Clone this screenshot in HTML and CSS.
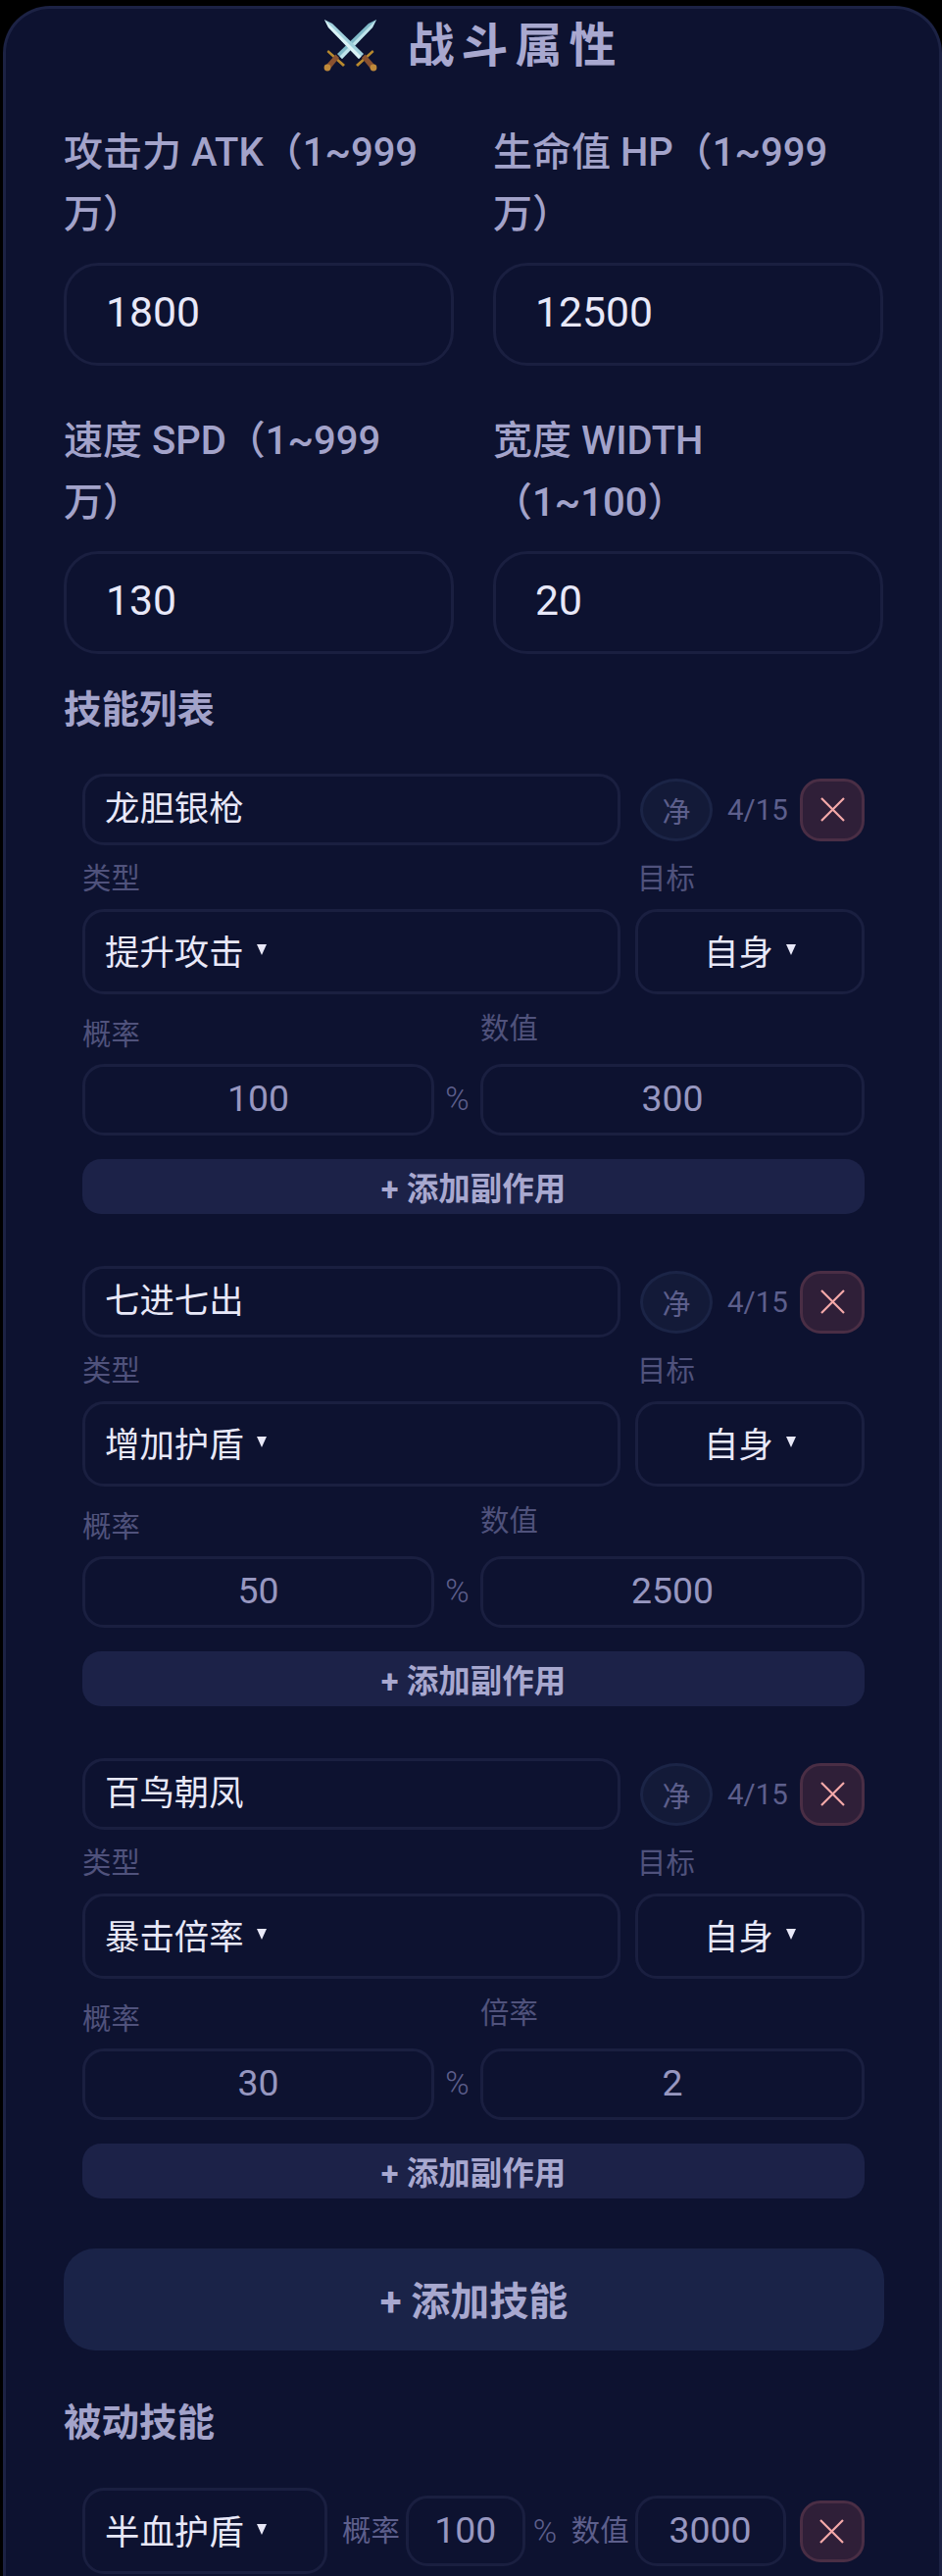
FILE: index.html
```html
<!DOCTYPE html>
<html lang="zh-CN">
<head>
<meta charset="utf-8">
<title>战斗属性</title>
<link rel="stylesheet" href="styles.css">
</head>
<body>
<main class="card">
  <h1 class="title">
    <svg class="swords" viewBox="0 0 55 54" aria-hidden="true">
      <g>
        <path d="M54 1 L46 5 L14 36 L19 41 L50 9 Z" fill="#7fb9c8"/>
        <path d="M54 1 L16.5 38.5 L19 41 L50 9 Z" fill="#bfe3ea"/>
        <path d="M22 47 L5 32 L3.5 34 L20 49 Z" fill="#b98a2e"/>
        <path d="M16 40 L12.5 36.5 L3 47 L7 51 Z" fill="#8a5230"/>
        <circle cx="4" cy="50" r="3.4" fill="#c08a3a"/>
      </g>
      <g>
        <path d="M1 1 L9 5 L41 36 L36 41 L5 9 Z" fill="#9fd0dc"/>
        <path d="M1 1 L38.5 38.5 L36 41 L5 9 Z" fill="#dcf3f6"/>
        <path d="M33 47 L50 32 L51.5 34 L35 49 Z" fill="#b98a2e"/>
        <path d="M39 40 L42.5 36.5 L52 47 L48 51 Z" fill="#8a5230"/>
        <circle cx="51" cy="50" r="3.4" fill="#c08a3a"/>
      </g>
    </svg>
    <span class="title-text">战斗属性</span>
  </h1>

  <div class="stats">
    <div class="stat"><div class="stat-label">攻击力 ATK（1~999<br>万）</div><div class="stat-input">1800</div></div>
    <div class="stat"><div class="stat-label">生命值 HP（1~999<br>万）</div><div class="stat-input">12500</div></div>
    <div class="stat"><div class="stat-label">速度 SPD（1~999<br>万）</div><div class="stat-input">130</div></div>
    <div class="stat"><div class="stat-label">宽度 WIDTH<br>（1~100）</div><div class="stat-input">20</div></div>
  </div>

  <h2 class="section">技能列表</h2>

  <section class="skill">
    <div class="skill-head">
      <div class="name-input">龙胆银枪</div>
      <button class="clean">净</button>
      <span class="count">4/15</span>
      <button class="remove"><svg class="x" viewBox="0 0 25 25"><path d="M1 1 L24 24 M24 1 L1 24"/></svg></button>
    </div>
    <div class="type-row">
      <div><div class="tiny">类型</div><div class="select">提升攻击<i class="caret"></i></div></div>
      <div><div class="tiny tiny-target">目标</div><div class="select select-center">自身<i class="caret"></i></div></div>
    </div>
    <div class="num-row">
      <div class="rate"><div class="tiny tiny-rate">概率</div><div class="num">100</div></div>
      <span class="pct">%</span>
      <div class="value"><div class="tiny tiny-value">数值</div><div class="num">300</div></div>
    </div>
    <button class="add-effect">+ 添加副作用</button>
  </section>

  <section class="skill">
    <div class="skill-head">
      <div class="name-input">七进七出</div>
      <button class="clean">净</button>
      <span class="count">4/15</span>
      <button class="remove"><svg class="x" viewBox="0 0 25 25"><path d="M1 1 L24 24 M24 1 L1 24"/></svg></button>
    </div>
    <div class="type-row">
      <div><div class="tiny">类型</div><div class="select">增加护盾<i class="caret"></i></div></div>
      <div><div class="tiny tiny-target">目标</div><div class="select select-center">自身<i class="caret"></i></div></div>
    </div>
    <div class="num-row">
      <div class="rate"><div class="tiny tiny-rate">概率</div><div class="num">50</div></div>
      <span class="pct">%</span>
      <div class="value"><div class="tiny tiny-value">数值</div><div class="num">2500</div></div>
    </div>
    <button class="add-effect">+ 添加副作用</button>
  </section>

  <section class="skill">
    <div class="skill-head">
      <div class="name-input">百鸟朝凤</div>
      <button class="clean">净</button>
      <span class="count">4/15</span>
      <button class="remove"><svg class="x" viewBox="0 0 25 25"><path d="M1 1 L24 24 M24 1 L1 24"/></svg></button>
    </div>
    <div class="type-row">
      <div><div class="tiny">类型</div><div class="select">暴击倍率<i class="caret"></i></div></div>
      <div><div class="tiny tiny-target">目标</div><div class="select select-center">自身<i class="caret"></i></div></div>
    </div>
    <div class="num-row">
      <div class="rate"><div class="tiny tiny-rate">概率</div><div class="num">30</div></div>
      <span class="pct">%</span>
      <div class="value"><div class="tiny tiny-value">倍率</div><div class="num">2</div></div>
    </div>
    <button class="add-effect">+ 添加副作用</button>
  </section>

  <button class="add-skill">+ 添加技能</button>

  <h2 class="section section-passive">被动技能</h2>

  <div class="passive">
    <div class="select passive-select">半血护盾<i class="caret"></i></div>
    <span class="tiny-inline">概率</span>
    <div class="num passive-rate">100</div>
    <span class="pct-inline">%</span>
    <span class="tiny-inline passive-value-label">数值</span>
    <div class="num passive-value">3000</div>
    <button class="remove passive-remove"><svg class="x" viewBox="0 0 25 25"><path d="M1 1 L24 24 M24 1 L1 24"/></svg></button>
  </div>
</main>
</body>
</html>
```

FILE: styles.css
```css
* { box-sizing: border-box; }

html, body {
  margin: 0;
  height: 2627px;
  overflow: hidden;
  background: #000;
}

body {
  font-family: Roboto, "Noto Sans CJK SC", sans-serif;
  padding: 6px 0 0 3px;
}

button {
  font-family: inherit;
  padding: 0;
  cursor: pointer;
}

.card {
  height: 2621px;
  border: 3px solid #1c2244;
  border-bottom: 0;
  border-radius: 48px 48px 0 0;
  background: #0d1230;
  padding: 0 57px 0 59px;
  overflow: hidden;
}

.title {
  margin: 0;
  height: 74px;
  display: flex;
  align-items: center;
  justify-content: center;
  gap: 30px;
  font-size: 48px;
  font-weight: 700;
  letter-spacing: 7px;
  color: #a8a8cf;
}

.title-text {
  margin-bottom: 9px;
}

.swords {
  width: 55px;
  height: 54px;
  flex: none;
}

.stats {
  margin-top: 41px;
  display: grid;
  grid-template-columns: 398px 398px;
  column-gap: 40px;
  row-gap: 45px;
}

.stat-label {
  font-size: 40px;
  line-height: 63px;
  height: 126px;
  font-weight: 500;
  color: #a3a3ca;
  margin-bottom: 18px;
}

.stat-input {
  height: 105px;
  border: 3px solid #1a1f40;
  border-radius: 35px;
  padding-left: 40px;
  font-size: 42.7px;
  line-height: 95px;
  color: #e8e8f8;
}

.section {
  margin: 25px 0 34px;
  font-size: 38.5px;
  line-height: 63px;
  font-weight: 700;
  color: #a3a3ca;
}

.section-passive {
  margin: 42px 0 35px;
}

.skill {
  margin: 0 19px 53px;
}

.skill-head {
  display: flex;
  align-items: center;
  height: 73px;
}

.name-input {
  flex: 1;
  height: 73px;
  border: 3px solid #1a1f40;
  border-radius: 22px;
  padding-left: 20px;
  font-size: 35.4px;
  line-height: 67px;
  color: #e8e8f8;
}

.clean {
  width: 74px;
  height: 64px;
  margin-left: 20px;
  border: 3px solid #1b2446;
  border-radius: 50%;
  background: #131a38;
  font-size: 29px;
  color: #5d5f8c;
}

.count {
  width: 60px;
  margin-left: 15px;
  font-size: 29.4px;
  color: #5d5f8c;
  white-space: nowrap;
}

.remove {
  width: 66px;
  height: 64px;
  margin-left: 14px;
  border: 3px solid #4a2e45;
  border-radius: 21px;
  background: #2f1f38;
  display: flex;
  align-items: center;
  justify-content: center;
}

.x {
  width: 25px;
  height: 25px;
  fill: none;
  stroke: #f4a9a9;
  stroke-width: 2.2;
}

.type-row {
  display: grid;
  grid-template-columns: 549px 234px;
  column-gap: 15px;
  margin-top: 14px;
}

.tiny {
  font-size: 29.4px;
  line-height: 40px;
  color: #50527c;
  margin-bottom: 11px;
}

.tiny-target {
  padding-left: 2px;
}

.select {
  height: 87px;
  border: 3px solid #1a1f40;
  border-radius: 22px;
  padding: 0 0 4px 20px;
  display: flex;
  align-items: center;
  font-size: 35.4px;
  color: #e8e8f8;
}

.select-center {
  justify-content: center;
  padding-left: 0;
}

.caret {
  width: 0;
  height: 0;
  margin-left: 13px;
  border-left: 5.5px solid transparent;
  border-right: 5.5px solid transparent;
  border-top: 11px solid #e8e8f8;
}

.num-row {
  display: flex;
  align-items: flex-end;
}

.rate {
  width: 359px;
  margin-top: 21px;
}

.value {
  flex: 1;
}

.tiny-rate {
  margin-bottom: 10px;
}

.tiny-value {
  margin-bottom: 16px;
}

.pct {
  width: 47px;
  height: 73px;
  line-height: 71px;
  text-align: center;
  font-size: 33px;
  font-weight: 300;
  color: #5d5f8c;
}

.num {
  height: 73px;
  border: 3px solid #1a1f40;
  border-radius: 22px;
  text-align: center;
  font-size: 37.4px;
  line-height: 65px;
  color: #9797c0;
}

.add-effect {
  display: block;
  width: 100%;
  height: 56px;
  margin-top: 24px;
  padding-bottom: 2px;
  border: 0;
  border-radius: 19px;
  background: #1c2248;
  font-size: 32.5px;
  font-weight: 700;
  color: #a8a8cf;
}

.add-skill {
  display: block;
  width: 837px;
  height: 104px;
  margin-top: -2px;
  padding-bottom: 2px;
  border: 0;
  border-radius: 32px;
  background: #1a2348;
  font-size: 40px;
  font-weight: 700;
  color: #a8a8cf;
}

.passive {
  display: flex;
  align-items: center;
  margin-left: 19px;
  width: 798px;
}

.passive-select {
  width: 250px;
  height: 88px;
  flex: none;
}

.tiny-inline {
  margin-left: 15px;
  margin-right: 6px;
  font-size: 29.4px;
  line-height: 40px;
  color: #5d5f8c;
  white-space: nowrap;
}

.pct-inline {
  width: 30px;
  margin-left: 8px;
  font-size: 33px;
  font-weight: 300;
  color: #5d5f8c;
}

.passive-rate {
  width: 122px;
  height: 72px;
  flex: none;
}

.passive-value-label {
  margin-left: 9px;
}

.passive-value {
  width: 154px;
  height: 72px;
  flex: none;
}

.passive-remove {
  height: 63px;
}
```
